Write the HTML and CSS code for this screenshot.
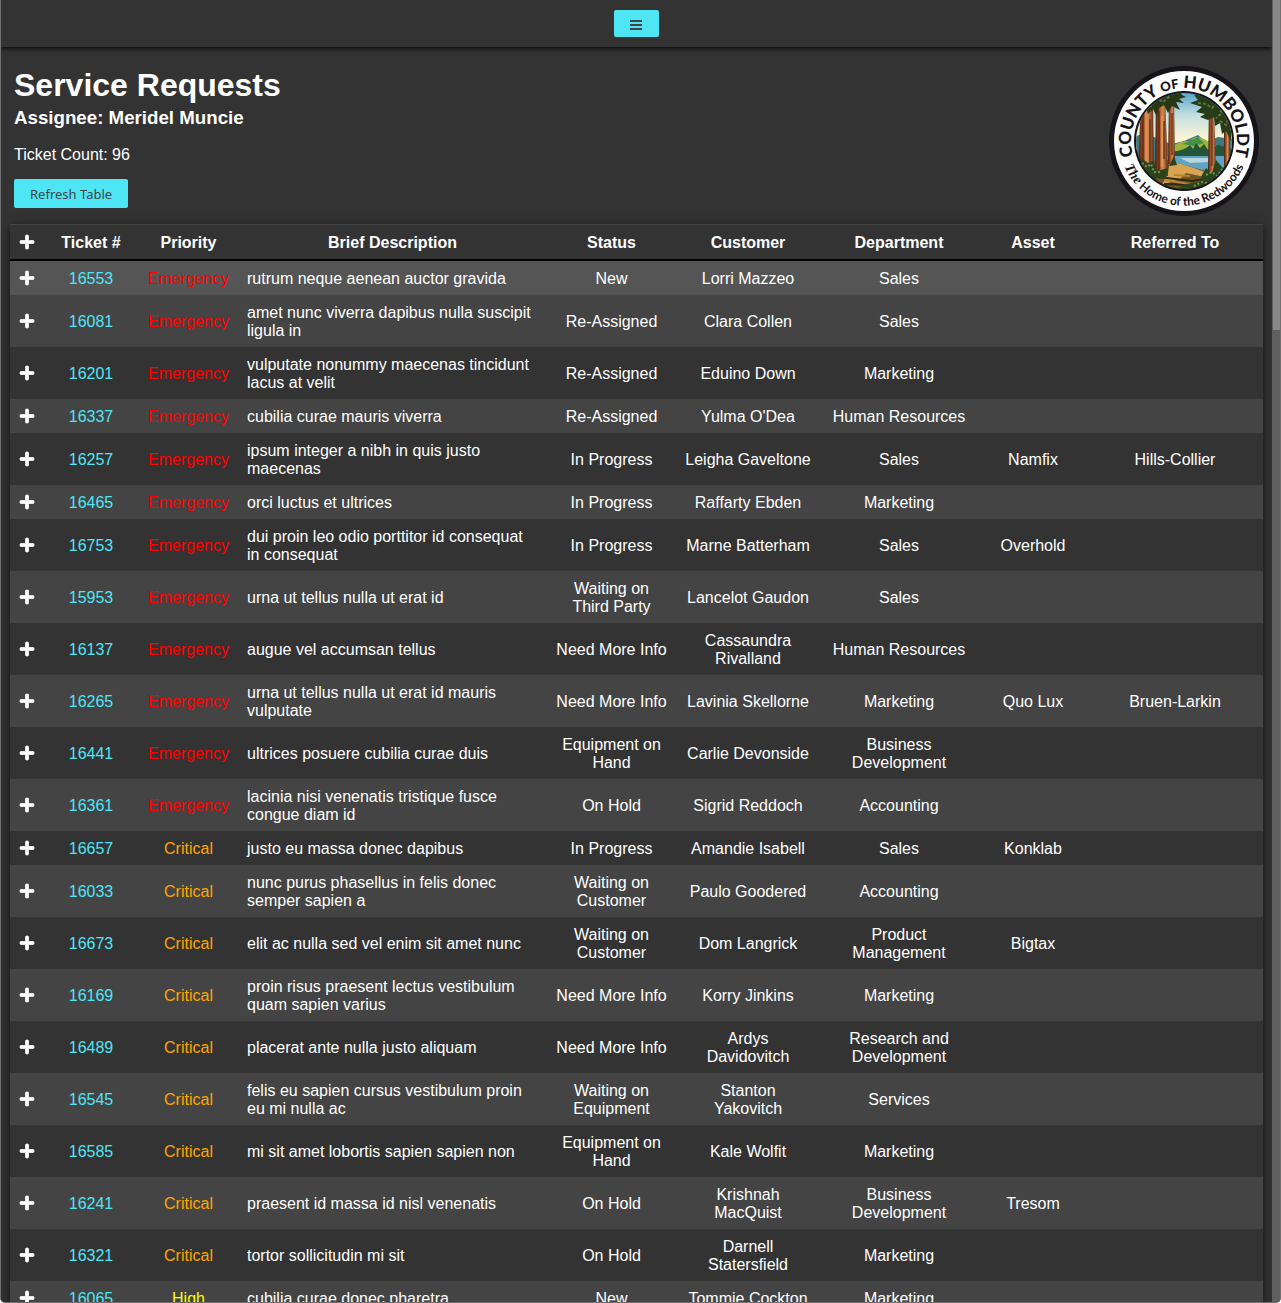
FILE: index.html
```html
<!DOCTYPE html>
<html lang="en">
<head>
<meta charset="utf-8">
<meta name="viewport" content="width=device-width, initial-scale=1">
<title>Service Requests</title>
<link rel="stylesheet" href="styles.css">
</head>
<body>
<svg class="sprite" aria-hidden="true">
  <symbol id="plus" viewBox="-16 0 480 512"><path d="M416 208H272V64c0-17.67-14.33-32-32-32h-32c-17.67 0-32 14.33-32 32v144H32c-17.67 0-32 14.33-32 32v32c0 17.67 14.33 32 32 32h144v144c0 17.67 14.33 32 32 32h32c17.67 0 32-14.33 32-32V304h144c17.67 0 32-14.33 32-32v-32c0-17.67-14.33-32-32-32z"/></symbol>
</svg>
<div class="window">
<div class="page">
  <nav class="nav">
    <button class="btn menu" type="button" aria-label="Menu">
      <svg width="12" height="10" viewBox="0 0 12 10" aria-hidden="true"><path d="M0 0h12v2H0zM0 4h12v2H0zM0 8h12v2H0z"/></svg>
    </button>
  </nav>
  <header class="header">
    <div class="intro">
      <h1>Service Requests</h1>
      <h3>Assignee: Meridel Muncie</h3>
      <p>Ticket Count: 96</p>
      <button class="btn refresh" type="button">Refresh Table</button>
    </div>
    <svg class="seal" viewBox="-75 -75 150 150" role="img" aria-label="County of Humboldt seal">
      <defs>
        <clipPath id="scene"><circle r="48"/></clipPath>
        <linearGradient id="sky" x1="0" y1="0" x2="0" y2="1">
          <stop offset="0" stop-color="#4f9fc9"/><stop offset=".4" stop-color="#c3dfe0"/><stop offset=".8" stop-color="#fbf4d4"/>
        </linearGradient>
        <linearGradient id="bark" x1="0" y1="0" x2="1" y2="0">
          <stop offset="0" stop-color="#3d2112"/><stop offset=".35" stop-color="#a9532a"/><stop offset=".6" stop-color="#d98a4c"/><stop offset="1" stop-color="#5a2a15"/>
        </linearGradient>
        <path id="arc-top" d="M-48 22.400A53 53 0 1 1 48 22.400"/>
        <path id="arc-bottom" d="M-61 22.200A65 65 0 0 0 61 22.200"/>
      </defs>
      <circle r="75" fill="#17131a"/>
      <circle r="70" fill="#fff"/>
      <circle r="50" fill="#17131a"/>
      <g clip-path="url(#scene)">
        <rect x="-50" y="-50" width="100" height="60" fill="url(#sky)"/>
        <path d="M-50 -4L-40 -8 -30 -4 -22 0 -12 3 0 0 14 -6 22 1 34 -4 50 -2V20H-50z" fill="#3f7a80"/>
        <path d="M-16 8Q-4 -1 6 0 12 -7 20 -2L34 6V18H-16z" fill="#9db53c"/>
        <path d="M-2 3Q8 -1 14 -4L20 2 10 5z" fill="#4b8f47"/>
        <path d="M-12 11Q2 9 6 4L9 8 12 2 16 7 20 3 24 9 34 4 50 8V18H-12z" fill="#24543a"/>
        <rect x="-20" y="15" width="70" height="20" fill="#5fa3c4"/>
        <path d="M-4 17H26L24 21 6 22z" fill="#b9d6dc"/>
        <path d="M-50 24L-20 18 0 24 30 32 50 28V50H-50z" fill="#6f5323"/>
        <path d="M-14 20Q10 26 28 34L16 35 2 32 -4 38 -22 44 -16 32z" fill="#d9a452"/>
        <path d="M-26 36L8 40 22 38M-20 43L12 44" stroke="#2c2a12" stroke-width="2" fill="none"/>
        <path d="M-20 39L6 43M-10 34L6 35" stroke="#b98136" stroke-width="2" fill="none"/>
        <g fill="url(#bark)">
          <path d="M-43 -40H-31L-30 30H-46z"/><path d="M-28 -50H-19L-16 35H-29z"/><path d="M-15 -45H-10L-9 23H-16z"/>
          <path d="M25 -38H30L32 30H24z"/><path d="M40 -30H46V35H40z"/>
        </g>
        <path d="M-41 -30V25M-34 -22V24M-25 -30V30M-20 -20V18M-12 -28V14M28 -25V25" stroke="#3b1c0e" fill="none"/>
        <path d="M-38 -30V20M-22 -25V26" stroke="#e9a765" fill="none"/>
        <path d="M-50 -22L-40 -42 -22 -52H-6L-2 -46 2 -44 -5 -42 0 -38 -8 -39 -4 -31 -12 -35 -16 -28 -20 -36 -25 -33 -27 -24 -31 -32 -36 -27 -38 -34 -42 -24z" fill="#263817"/>
        <path d="M6 -38L14 -41 10 -46 22 -46 36 -42 48 -20 47 0 42 -10 38 -7 36 -18 31 -15 30 -24 24 -21 16 -24 21 -27 12 -29 18 -34z" fill="#263b18"/>
        <path d="M-40 -37l7 2 6 -8 6 4 8 -7M14 -38l8 1 6 4 5 -5 5 10 -6 5M36 -20l6 4 3 -8" stroke="#62783a" stroke-width="2" fill="none" stroke-dasharray="3 2"/>
        <path d="M-50 20L-43 17 -36 22 -31 20 -27 30 -16 27 -18 38 -28 37 -24 46 -50 44zM-15 25L-10 15 -7 24zM18 34L22 27 28 32 32 19 39 27 47 18 50 50H-12L2 43 16 41z" fill="#2a4420"/>
        <path d="M-42 22l5 4 4 -3 3 8 8 0M22 34l6 -3 5 4 6 -8M10 45l8 -4 8 2" stroke="#7f9240" stroke-width="2" fill="none" stroke-dasharray="2 2"/>
      </g>
      <text class="seal-top"><textPath href="#arc-top" startOffset="50%">COUNTY <tspan class="seal-of">OF</tspan> HUMBOLDT</textPath></text>
      <text class="seal-bottom"><textPath href="#arc-bottom" startOffset="50%"><tspan class="seal-the">The</tspan> Home of the Redwoods</textPath></text>
    </svg>
  </header>
  <main class="content">
    <table class="tickets">
      <colgroup><col class="c-plus"><col class="c-ticket"><col class="c-priority"><col class="c-brief"><col class="c-status"><col class="c-customer"><col class="c-department"><col class="c-asset"><col class="c-referred"></colgroup>
      <thead>
        <tr><th><button class="expand" type="button" aria-label="Expand all"><svg><use href="#plus"/></svg></button></th><th>Ticket #</th><th>Priority</th><th>Brief Description</th><th>Status</th><th>Customer</th><th>Department</th><th>Asset</th><th>Referred To</th></tr>
      </thead>
      <tbody>
        <tr class="active"><td><button class="expand" type="button" aria-label="Expand"><svg><use href="#plus"/></svg></button></td><td><a href="#16553">16553</a></td><td class="emergency">Emergency</td><td class="brief">rutrum neque aenean auctor gravida</td><td>New</td><td>Lorri Mazzeo</td><td>Sales</td><td></td><td></td></tr>
        <tr><td><button class="expand" type="button" aria-label="Expand"><svg><use href="#plus"/></svg></button></td><td><a href="#16081">16081</a></td><td class="emergency">Emergency</td><td class="brief">amet nunc viverra dapibus nulla suscipit ligula in</td><td>Re-Assigned</td><td>Clara Collen</td><td>Sales</td><td></td><td></td></tr>
        <tr><td><button class="expand" type="button" aria-label="Expand"><svg><use href="#plus"/></svg></button></td><td><a href="#16201">16201</a></td><td class="emergency">Emergency</td><td class="brief">vulputate nonummy maecenas tincidunt lacus at velit</td><td>Re-Assigned</td><td>Eduino Down</td><td>Marketing</td><td></td><td></td></tr>
        <tr><td><button class="expand" type="button" aria-label="Expand"><svg><use href="#plus"/></svg></button></td><td><a href="#16337">16337</a></td><td class="emergency">Emergency</td><td class="brief">cubilia curae mauris viverra</td><td>Re-Assigned</td><td>Yulma O'Dea</td><td>Human Resources</td><td></td><td></td></tr>
        <tr><td><button class="expand" type="button" aria-label="Expand"><svg><use href="#plus"/></svg></button></td><td><a href="#16257">16257</a></td><td class="emergency">Emergency</td><td class="brief">ipsum integer a nibh in quis justo maecenas</td><td>In Progress</td><td>Leigha Gaveltone</td><td>Sales</td><td>Namfix</td><td>Hills-Collier</td></tr>
        <tr><td><button class="expand" type="button" aria-label="Expand"><svg><use href="#plus"/></svg></button></td><td><a href="#16465">16465</a></td><td class="emergency">Emergency</td><td class="brief">orci luctus et ultrices</td><td>In Progress</td><td>Raffarty Ebden</td><td>Marketing</td><td></td><td></td></tr>
        <tr><td><button class="expand" type="button" aria-label="Expand"><svg><use href="#plus"/></svg></button></td><td><a href="#16753">16753</a></td><td class="emergency">Emergency</td><td class="brief">dui proin leo odio porttitor id consequat in consequat</td><td>In Progress</td><td>Marne Batterham</td><td>Sales</td><td>Overhold</td><td></td></tr>
        <tr><td><button class="expand" type="button" aria-label="Expand"><svg><use href="#plus"/></svg></button></td><td><a href="#15953">15953</a></td><td class="emergency">Emergency</td><td class="brief">urna ut tellus nulla ut erat id</td><td>Waiting on Third Party</td><td>Lancelot Gaudon</td><td>Sales</td><td></td><td></td></tr>
        <tr><td><button class="expand" type="button" aria-label="Expand"><svg><use href="#plus"/></svg></button></td><td><a href="#16137">16137</a></td><td class="emergency">Emergency</td><td class="brief">augue vel accumsan tellus</td><td>Need More Info</td><td>Cassaundra Rivalland</td><td>Human Resources</td><td></td><td></td></tr>
        <tr><td><button class="expand" type="button" aria-label="Expand"><svg><use href="#plus"/></svg></button></td><td><a href="#16265">16265</a></td><td class="emergency">Emergency</td><td class="brief">urna ut tellus nulla ut erat id mauris vulputate</td><td>Need More Info</td><td>Lavinia Skellorne</td><td>Marketing</td><td>Quo Lux</td><td>Bruen-Larkin</td></tr>
        <tr><td><button class="expand" type="button" aria-label="Expand"><svg><use href="#plus"/></svg></button></td><td><a href="#16441">16441</a></td><td class="emergency">Emergency</td><td class="brief">ultrices posuere cubilia curae duis</td><td>Equipment on Hand</td><td>Carlie Devonside</td><td>Business Development</td><td></td><td></td></tr>
        <tr><td><button class="expand" type="button" aria-label="Expand"><svg><use href="#plus"/></svg></button></td><td><a href="#16361">16361</a></td><td class="emergency">Emergency</td><td class="brief">lacinia nisi venenatis tristique fusce congue diam id</td><td>On Hold</td><td>Sigrid Reddoch</td><td>Accounting</td><td></td><td></td></tr>
        <tr><td><button class="expand" type="button" aria-label="Expand"><svg><use href="#plus"/></svg></button></td><td><a href="#16657">16657</a></td><td class="critical">Critical</td><td class="brief">justo eu massa donec dapibus</td><td>In Progress</td><td>Amandie Isabell</td><td>Sales</td><td>Konklab</td><td></td></tr>
        <tr><td><button class="expand" type="button" aria-label="Expand"><svg><use href="#plus"/></svg></button></td><td><a href="#16033">16033</a></td><td class="critical">Critical</td><td class="brief">nunc purus phasellus in felis donec semper sapien a</td><td>Waiting on Customer</td><td>Paulo Goodered</td><td>Accounting</td><td></td><td></td></tr>
        <tr><td><button class="expand" type="button" aria-label="Expand"><svg><use href="#plus"/></svg></button></td><td><a href="#16673">16673</a></td><td class="critical">Critical</td><td class="brief">elit ac nulla sed vel enim sit amet nunc</td><td>Waiting on Customer</td><td>Dom Langrick</td><td>Product Management</td><td>Bigtax</td><td></td></tr>
        <tr><td><button class="expand" type="button" aria-label="Expand"><svg><use href="#plus"/></svg></button></td><td><a href="#16169">16169</a></td><td class="critical">Critical</td><td class="brief">proin risus praesent lectus vestibulum quam sapien varius</td><td>Need More Info</td><td>Korry Jinkins</td><td>Marketing</td><td></td><td></td></tr>
        <tr><td><button class="expand" type="button" aria-label="Expand"><svg><use href="#plus"/></svg></button></td><td><a href="#16489">16489</a></td><td class="critical">Critical</td><td class="brief">placerat ante nulla justo aliquam</td><td>Need More Info</td><td>Ardys Davidovitch</td><td>Research and Development</td><td></td><td></td></tr>
        <tr><td><button class="expand" type="button" aria-label="Expand"><svg><use href="#plus"/></svg></button></td><td><a href="#16545">16545</a></td><td class="critical">Critical</td><td class="brief">felis eu sapien cursus vestibulum proin eu mi nulla ac</td><td>Waiting on Equipment</td><td>Stanton Yakovitch</td><td>Services</td><td></td><td></td></tr>
        <tr><td><button class="expand" type="button" aria-label="Expand"><svg><use href="#plus"/></svg></button></td><td><a href="#16585">16585</a></td><td class="critical">Critical</td><td class="brief">mi sit amet lobortis sapien sapien non</td><td>Equipment on Hand</td><td>Kale Wolfit</td><td>Marketing</td><td></td><td></td></tr>
        <tr><td><button class="expand" type="button" aria-label="Expand"><svg><use href="#plus"/></svg></button></td><td><a href="#16241">16241</a></td><td class="critical">Critical</td><td class="brief">praesent id massa id nisl venenatis</td><td>On Hold</td><td>Krishnah MacQuist</td><td>Business Development</td><td>Tresom</td><td></td></tr>
        <tr><td><button class="expand" type="button" aria-label="Expand"><svg><use href="#plus"/></svg></button></td><td><a href="#16321">16321</a></td><td class="critical">Critical</td><td class="brief">tortor sollicitudin mi sit</td><td>On Hold</td><td>Darnell Statersfield</td><td>Marketing</td><td></td><td></td></tr>
        <tr><td><button class="expand" type="button" aria-label="Expand"><svg><use href="#plus"/></svg></button></td><td><a href="#16065">16065</a></td><td class="high">High</td><td class="brief">cubilia curae donec pharetra</td><td>New</td><td>Tommie Cockton</td><td>Marketing</td><td></td><td></td></tr>
      </tbody>
    </table>
  </main>
</div>
<div class="scrollbar" aria-hidden="true"><div class="thumb"></div></div>
</div>
</body>
</html>
```
FILE: styles.css
```css
* { box-sizing: border-box; }

html { background: #fff; }

body {
  margin: 0;
  color: #fff;
  font: 16px/18px "Liberation Sans", Arial, sans-serif;
}

.sprite { display: none; }

/* Window frame: scrolling page on the left, scrollbar on the right */
.window {
  display: flex;
  height: 100vh;
  overflow: hidden;
  background: #333;
  border: solid #707070;
  border-width: 0 1px 1px;
  border-radius: 0 0 5px 5px;
}

.page {
  flex: 1;
  min-width: 0;
  overflow-x: hidden;
  overflow-y: auto;
  scrollbar-width: none;
}

.scrollbar {
  width: 8px;
  padding: 0 0 0 1px;
  background: #606060;
}

.thumb {
  height: 330px;
  background: #888;
}

.nav {
  display: flex;
  justify-content: center;
  padding: 10px 0;
  box-shadow: 0 1px 5px #000;
}

.btn {
  border: 0;
  border-radius: 2px;
  background: #4ee6f5;
  color: #444;
  font: 13px/17px "Noto Sans", Tahoma, sans-serif;
  cursor: pointer;
}

.menu {
  display: flex;
  align-items: center;
  justify-content: center;
  width: 45px;
  height: 27px;
  padding: 2px 1px 0 0;
  fill: #444;
}

.header {
  display: flex;
  justify-content: space-between;
  align-items: flex-start;
  padding: 19px 13px 8px;
}

.intro h1,
.intro h3,
.intro p { margin: 0; }

.intro h1 { line-height: 38px; }
.intro h3 { line-height: 28px; }
.intro p { padding: 14px 0 15px; }
.refresh { padding: 7px 16px 5px; }

.seal { width: 150px; height: 150px; }

.seal-top,
.seal-bottom { text-anchor: middle; fill: #17131a; }
.seal-top { font: 900 17px Lato, sans-serif; }
.seal-of { font-size: 13px; }
.seal-bottom { font: 700 12px Lato, sans-serif; }
.seal-the { font: italic 700 14px "Liberation Serif", serif; }

.content { padding: 0 9px 10px; }

.tickets {
  width: 100%;
  table-layout: fixed;
  border-collapse: separate;
  border-spacing: 0;
  background: #333;
  box-shadow: 0 3px 10px rgba(0, 0, 0, .6);
  text-align: center;
}

.c-plus { width: 34px; }
.c-ticket { width: 94px; }
.c-priority { width: 101px; }
.c-brief { width: 307px; }
.c-status { width: 131px; }
.c-customer { width: 142px; }
.c-department { width: 160px; }
.c-asset { width: 108px; }
.c-referred { width: 176px; }

.tickets th,
.tickets td { padding: 9px 8px 7px; }

.tickets th:first-child,
.tickets td:first-child { padding: 8px; }

.tickets th {
  border-top: 1px solid #444;
  border-bottom: 2px solid #000;
}

.tickets tbody tr:nth-child(even) { background: #444; }
.tickets tbody .active { background: #555; }
.tickets .brief { text-align: left; }

.tickets a { color: #4ee6f5; text-decoration: none; }

.emergency { color: #f00; }
.critical { color: #ffa500; }
.high { color: #ff0; }

.expand {
  display: flex;
  justify-content: center;
  align-items: center;
  width: 100%;
  height: 18px;
  padding: 0;
  border: 0;
  background: none;
  cursor: pointer;
}

.expand svg {
  flex: none;
  width: 16px;
  height: 16px;
  fill: #fff;
  stroke: #fff;
  stroke-width: 24px;
}
```
